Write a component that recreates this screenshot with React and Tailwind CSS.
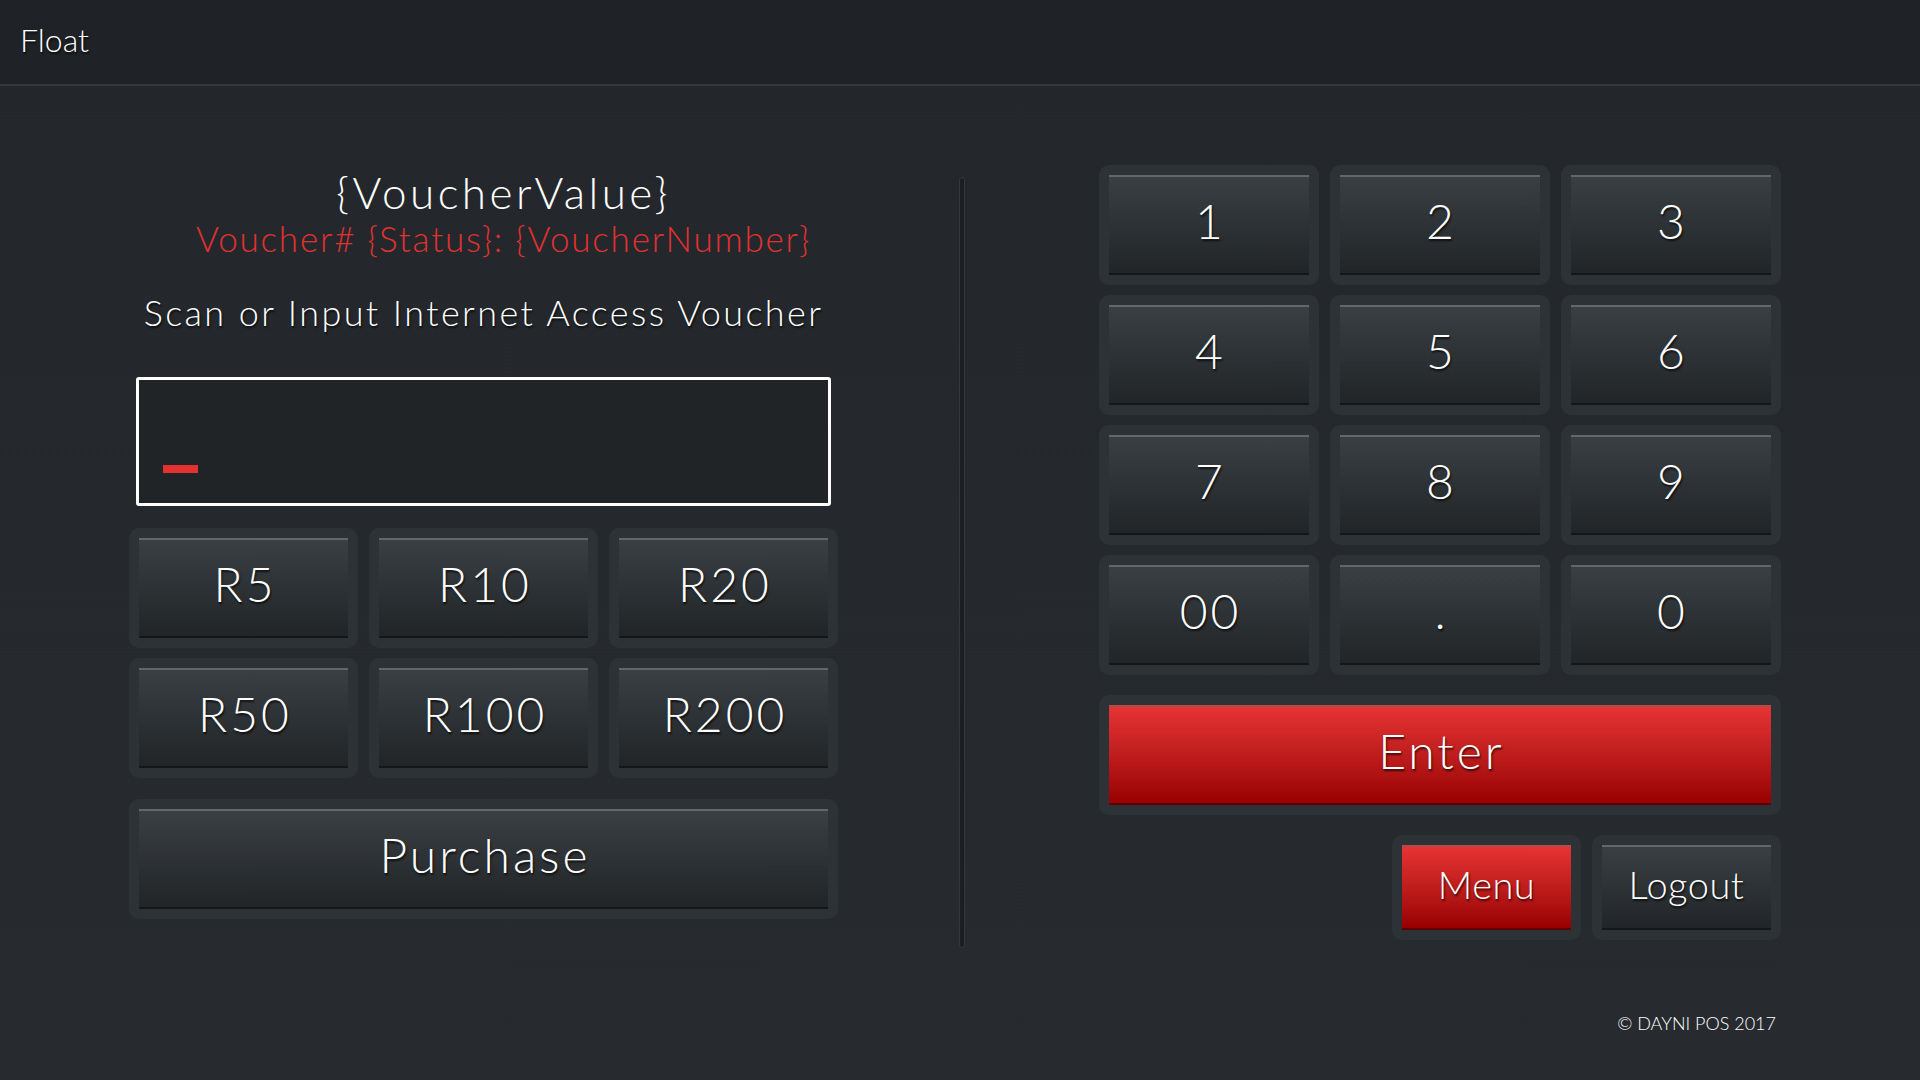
import { useState } from "react";

const amounts = ["R5", "R10", "R20", "R50", "R100", "R200"];
const keys = ["1", "2", "3", "4", "5", "6", "7", "8", "9", "00", ".", "0"];

const shadow = "[text-shadow:1px_2px_2px_rgba(0,0,0,0.7)]";

function Key({ label, red, className = "", textClass = "text-[48px] tracking-[3px] pl-[3px]", onClick }) {
  return (
    <div className={`rounded-[10px] bg-[#2d3236] p-[10px] ${className}`}>
      <button
        onClick={onClick}
        className={`flex h-full w-full items-center justify-center border-t-2 border-b-2 pb-[8px] ${
          red
            ? "border-t-[#b14c4c] border-b-[#5c0000] bg-linear-to-b from-[#e63334] to-[#980000]"
            : "border-t-[#62676b] border-b-[#141618] bg-linear-to-b from-[#3a3f43] to-[#212528]"
        } ${textClass} ${shadow} leading-none font-light text-white`}
      >
        {label}
      </button>
    </div>
  );
}

export default function App() {
  const [value, setValue] = useState("");

  const press = (k) => setValue((v) => v + k);

  return (
    <div className="min-h-screen w-full bg-linear-to-b from-[#23272b] to-[#272b2f] font-['Lato','Open_Sans',sans-serif] font-light text-white">
      {/* Barre du haut */}
      <header className="flex h-[86px] items-center border-b-2 border-[#33383c] bg-[#1f2327] px-[20px] pb-[4px]">
        <span className={`text-[32px] leading-none ${shadow}`}>Float</span>
      </header>

      <main className="flex pl-[129px] pt-[79px]">
        {/* Colonne voucher */}
        <div className="flex w-[709px] flex-col">
          <div className="flex flex-col items-center pl-[40px]">
            <div className="mt-[3px] text-[44px] leading-[48px] tracking-[3.5px]">{"{VoucherValue}"}</div>
            <div className="mt-[2px] text-[35px] leading-[40px] tracking-[1.8px] text-[#e03131]">
              {"Voucher# {Status}: {VoucherNumber}"}
            </div>
          </div>
          <div className={`mt-[34px] text-center text-[36px] leading-[40px] tracking-[2.4px] ${shadow}`}>
            Scan or Input Internet Access Voucher
          </div>

          <div className="mx-[7px] mt-[45px] flex h-[129px] items-end rounded-[3px] border-[3px] border-white bg-[#202427] px-[24px] pb-[30px]">
            {value ? (
              <span className="text-[40px] leading-none">{value}</span>
            ) : (
              <span className="h-[8px] w-[35px] bg-[#e53030]" />
            )}
          </div>

          <div className="mt-[22px] grid grid-cols-3 gap-x-[11px] gap-y-[10px]">
            {amounts.map((a) => (
              <Key key={a} label={a} className="h-[120px]" onClick={() => setValue(a.slice(1))} />
            ))}
          </div>

          <Key label="Purchase" className="mt-[21px] h-[120px]" />
        </div>

        {/* Séparateur */}
        <div className="mt-[12px] ml-[121px] mr-[134px] h-[771px] w-[6px] rounded-full border border-[#34383c] bg-[#1c1f22]" />

        {/* Pavé numérique */}
        <div className="flex w-[682px] flex-col">
          <div className="grid grid-cols-3 gap-x-[11px] gap-y-[10px]">
            {keys.map((k) => (
              <Key key={k} label={k} className="h-[120px]" onClick={() => press(k)} />
            ))}
          </div>

          <Key label="Enter" red className="mt-[20px] h-[120px]" />

          <div className="mt-[20px] flex justify-end gap-[11px]">
            <Key label="Menu" red className="h-[105px] w-[189px]" textClass="text-[38px] tracking-[0.5px]" />
            <Key label="Logout" className="h-[105px] w-[189px]" textClass="text-[38px] tracking-[0.5px]" />
          </div>

          <div className="mt-[74px] mr-[5px] text-right text-[18px] leading-none">© DAYNI POS 2017</div>
        </div>
      </main>
    </div>
  );
}
